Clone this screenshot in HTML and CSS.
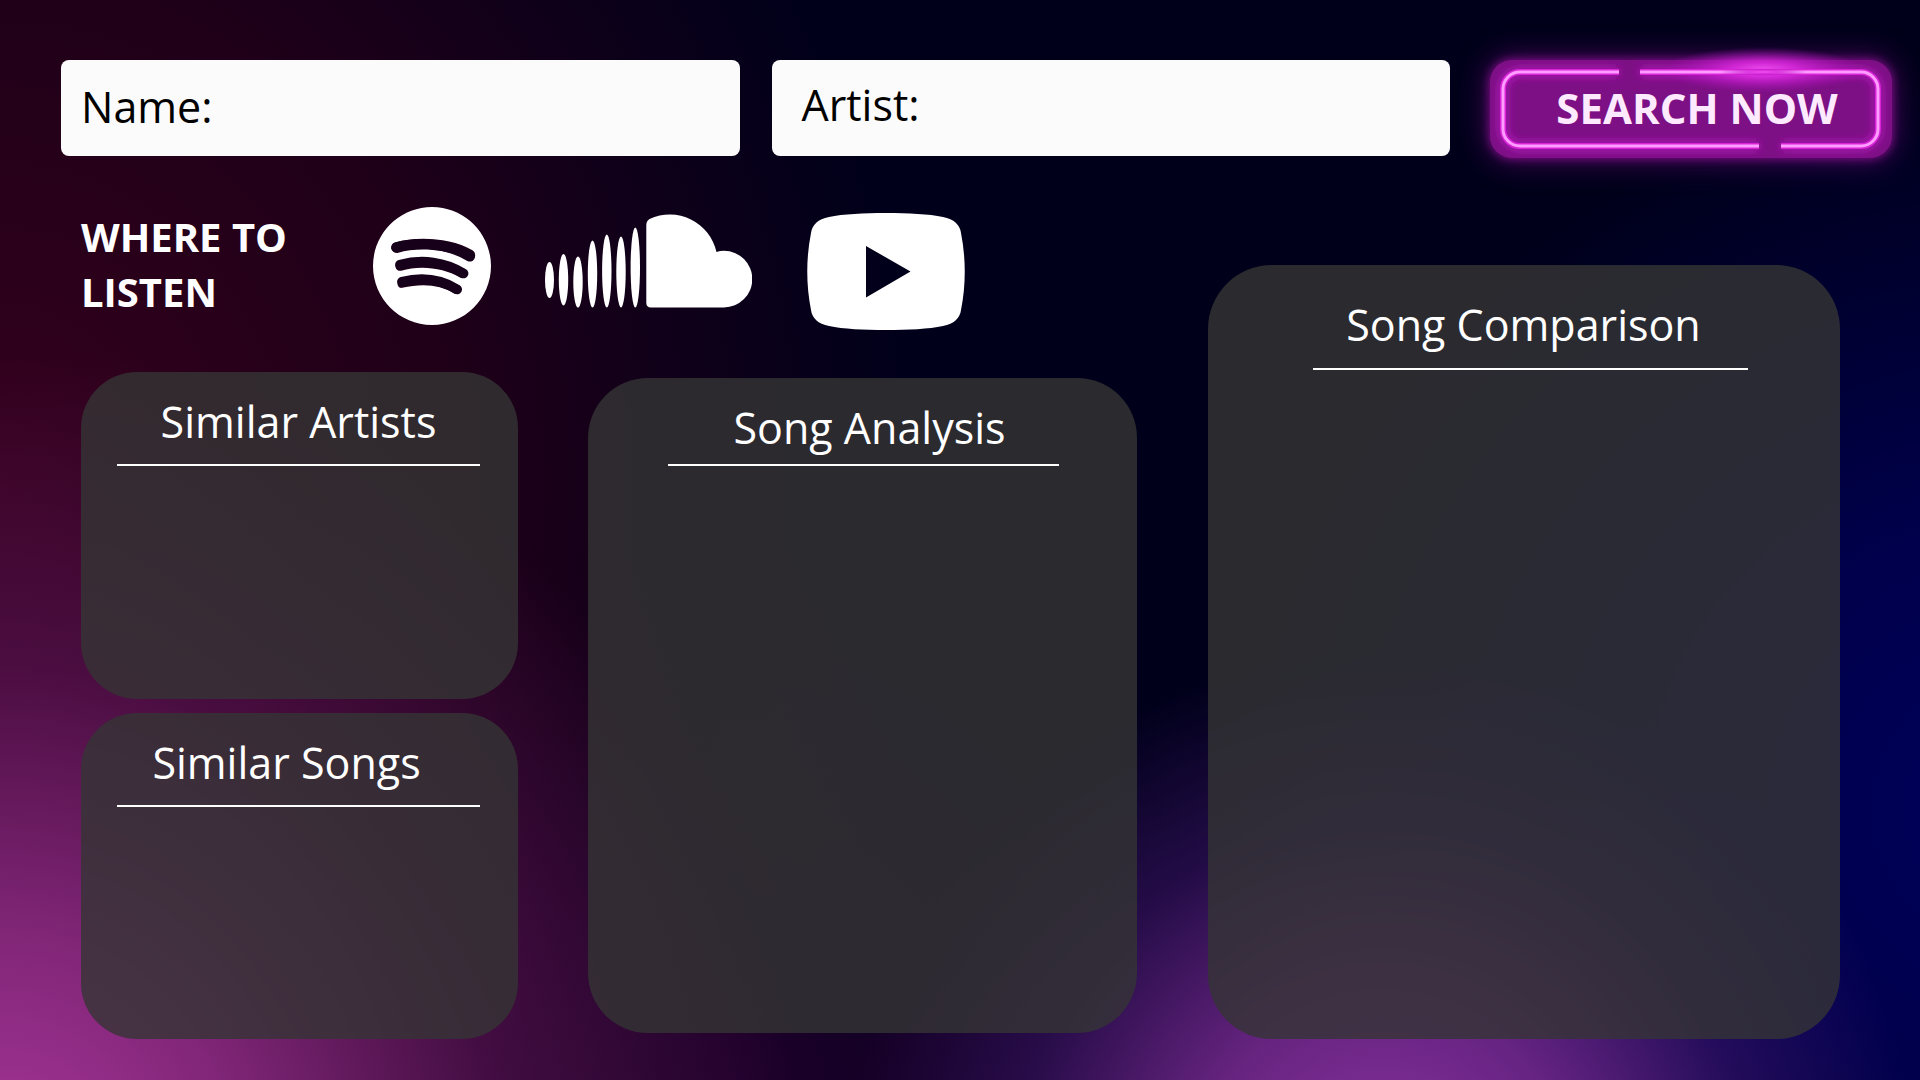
FILE: index.html
```html
<!DOCTYPE html>
<html lang="en">
<head>
<meta charset="utf-8">
<meta name="viewport" content="width=device-width, initial-scale=1">
<title>Song Search</title>
<link rel="stylesheet" href="styles.css">
</head>
<body>
<form class="search">
  <div class="field">
    <label for="name">Name:</label>
    <input id="name" type="text">
  </div>
  <div class="field field-artist">
    <label for="artist">Artist:</label>
    <input id="artist" type="text">
  </div>
  <button class="neon" type="submit">
    <svg class="neon-frame" viewBox="0 0 402 98" aria-hidden="true">
      <defs>
        <filter id="soft" x="-20%" y="-60%" width="140%" height="220%"><feGaussianBlur stdDeviation="5"/></filter>
        <radialGradient id="flare">
          <stop offset="0" stop-color="#f050f0"/>
          <stop offset=".35" stop-color="#d828dc" stop-opacity=".85"/>
          <stop offset="1" stop-color="#b010c0" stop-opacity="0"/>
        </radialGradient>
        <path id="tube" d="M129 12H30A17 17 0 0 0 13 29V69A17 17 0 0 0 30 86H269M291 86H371A17 17 0 0 0 388 69V29A17 17 0 0 0 371 12H150"/>
      </defs>
      <use href="#tube" fill="none" stroke="#b014b8" stroke-width="9" filter="url(#soft)"/>
      <ellipse cx="273" cy="10" rx="100" ry="23" fill="url(#flare)"/>
      <use href="#tube" fill="none" stroke="#d824d6" stroke-width="6"/>
      <use href="#tube" fill="none" stroke="#ff9cff" stroke-width="3"/>
      <ellipse cx="273" cy="12" rx="44" ry="4" fill="url(#flare)"/>
    </svg>
    <span class="neon-text">SEARCH NOW</span>
  </button>
</form>

<main class="board">
  <div class="main-column">
    <section class="listen">
      <h2 class="listen-title">WHERE TO LISTEN</h2>
      <a class="spotify" href="#spotify" aria-label="Spotify">
        <svg viewBox="0 0 24 24" width="118" height="118"><path d="M12 0C5.4 0 0 5.4 0 12s5.4 12 12 12 12-5.4 12-12S18.66 0 12 0zm5.521 17.34c-.24.359-.66.48-1.021.24-2.82-1.74-6.36-2.101-10.561-1.141-.418.122-.779-.179-.899-.539-.12-.421.18-.78.54-.9 4.56-1.021 8.52-.6 11.64 1.32.42.18.479.659.301 1.02zm1.44-3.3c-.301.42-.841.6-1.262.3-3.239-1.98-8.159-2.58-11.939-1.38-.479.12-1.02-.12-1.14-.6-.12-.48.12-1.021.6-1.141C9.6 9.9 15 10.561 18.72 12.84c.361.181.54.78.241 1.2zm.12-3.36C15.24 8.4 8.82 8.16 5.16 9.301c-.6.179-1.2-.181-1.38-.721-.18-.601.18-1.2.72-1.381 4.26-1.26 11.28-1.02 15.721 1.621.539.3.719 1.02.419 1.56-.299.421-1.02.599-1.559.3z"/><path class="wave" d="M4.700 8.200C9.400 6.900 15.100 7.400 19.700 10.100M5.500 11.750C10 10.500 14.700 11.200 18.400 13.500M5.900 15.200C10 14.200 13.800 14.700 17.100 16.750"/></svg>
      </a>
      <a class="soundcloud" href="#soundcloud" aria-label="SoundCloud">
        <svg viewBox="0 0 207 94" width="207" height="94">
          <ellipse cx="4.5" cy="66" rx="4.5" ry="18"/>
          <ellipse cx="18.5" cy="65.7" rx="4.7" ry="25.8"/>
          <ellipse cx="33" cy="68" rx="4.7" ry="25.6"/>
          <ellipse cx="47.5" cy="60" rx="4.7" ry="33.5"/>
          <ellipse cx="61.8" cy="57" rx="4.7" ry="36.5"/>
          <ellipse cx="76" cy="58" rx="4.7" ry="35.5"/>
          <ellipse cx="90.3" cy="53.5" rx="4.7" ry="40"/>
          <path d="M101.300 11Q101.300 7 104.500 5A48 48 0 0 1 171.500 38Q175 36.800 179 36.800A28.200 28.200 0 0 1 179 93.400H106Q101.300 93.400 101.300 88.700Z"/>
        </svg>
      </a>
      <a class="youtube" href="#youtube" aria-label="YouTube">
        <svg viewBox="0 0 158 117" width="158" height="117"><path fill-rule="evenodd" d="M79 0C101 0 122 1 136 4C147 6 153 12 154 20C159 45 159 72 154 97C153 105 147 111 136 113C122 116 101 117 79 117S36 116 22 113C11 111 5 105 4 97C-1 72-1 45 4 20C5 12 11 6 22 4C36 1 57 0 79 0ZM59 33V84.500L103.500 58.500Z"/></svg>
      </a>
    </section>
    <div class="cards">
      <div class="similar">
        <section class="card card-artists"><h2>Similar Artists</h2></section>
        <section class="card card-songs"><h2>Similar Songs</h2></section>
      </div>
      <section class="card card-analysis"><h2>Song Analysis</h2></section>
    </div>
  </div>
  <section class="card card-comparison"><h2>Song Comparison</h2></section>
</main>
</body>
</html>
```
FILE: styles.css
```css
* {
  box-sizing: border-box;
}

body {
  margin: 0;
  min-height: 100vh;
  display: flex;
  flex-direction: column;
  font-family: "Open Sans", "Noto Sans", sans-serif;
  font-size: 43px;
  color: #fff;
  background:
    radial-gradient(ellipse 28% 50% at 72% 110%, rgba(140, 50, 160, 1) 0%, rgba(120, 42, 145, .85) 35%, rgba(70, 24, 115, .5) 68%, rgba(30, 5, 80, 0) 100%),
    radial-gradient(ellipse 42% 78% at 0% 110%, rgba(170, 55, 155, 1) 0%, rgba(140, 42, 130, .9) 30%, rgba(96, 22, 90, .6) 62%, rgba(45, 0, 45, 0) 100%),
    radial-gradient(ellipse 48% 95% at 0% 45%, rgba(52, 0, 28, 1) 0%, rgba(34, 0, 24, .9) 50%, rgba(10, 0, 24, 0) 100%),
    radial-gradient(ellipse 42% 68% at 106% 75%, #00005c 0%, rgba(0, 0, 84, .85) 40%, rgba(0, 0, 26, 0) 100%),
    radial-gradient(ellipse 26% 50% at 38% 100%, rgba(36, 0, 46, .8) 0%, rgba(30, 0, 40, 0) 100%),
    #00001a;
}

h2 {
  margin: 0;
  font-size: 43px;
  font-weight: 400;
}

.search {
  display: grid;
  grid-template-columns: minmax(0, 1fr) minmax(0, 1fr) 402px;
  column-gap: 32px;
  padding: 60px 28px 0 61px;
}

.field {
  display: flex;
  align-items: center;
  height: 96px;
  padding: 0 20px 4px;
  border-radius: 8px;
  background: #fbfbfb;
  color: #000;
}

.field:first-child {
  margin-right: 4px;
}

.field-artist {
  margin-right: 8px;
  margin-left: -4px;
  padding: 0 30px 8px;
}

.field input {
  flex: 1;
  min-width: 0;
  margin-left: 12px;
  border: 0;
  outline: 0;
  background: transparent;
  font: inherit;
}

.neon {
  position: relative;
  height: 98px;
  padding: 0 0 4px 12px;
  border: 0;
  border-radius: 22px;
  background: #7c1084;
  box-shadow: 0 0 8px 1px #780c80, 0 0 28px 4px rgba(120, 14, 134, .55);
  font: inherit;
  font-size: 42px;
  font-weight: 700;
  color: #fdeaff;
}

.neon-frame {
  position: absolute;
  inset: 0;
  width: 100%;
  height: 100%;
  overflow: visible;
}

.neon-text {
  position: relative;
}

.board {
  flex: 1;
  display: grid;
  grid-template-columns: 1056fr 632fr;
  column-gap: 71px;
  padding: 0 80px 41px 81px;
}

.main-column {
  display: flex;
  flex-direction: column;
}

.listen {
  display: flex;
  align-items: flex-start;
  height: 214px;
  padding-top: 49px;
}

.listen svg {
  display: block;
  fill: #fff;
}

.listen .wave {
  fill: none;
  stroke: #16001a;
  stroke-width: 2;
  stroke-linecap: round;
}

.listen-title {
  width: 240px;
  margin-right: 52px;
  padding-top: 2px;
  font-size: 40px;
  font-weight: 700;
  line-height: 55px;
}

.soundcloud {
  margin: 7px 55px 0 54px;
}

.youtube {
  margin-top: 6px;
}

.cards {
  flex: 1;
  display: grid;
  grid-template-columns: 437fr 549fr;
  column-gap: 70px;
}

.similar {
  display: grid;
  grid-template-rows: 1fr 1fr;
  row-gap: 14px;
}

.card {
  border-radius: 60px;
  background: rgba(53, 53, 53, .8);
  text-align: center;
}

.card h2 {
  line-height: 60px;
  border-bottom: 2px solid #fff;
}

.card-artists,
.card-songs {
  padding: 20px 38px 0 36px;
  border-radius: 56px;
}

.card-artists h2,
.card-songs h2 {
  padding-bottom: 12px;
}

.card-songs h2 {
  padding-right: 24px;
}

.card-analysis {
  margin: 6px 0;
  padding: 20px 78px 0 80px;
}

.card-analysis h2 {
  padding: 0 0 6px 12px;
}

.card-comparison {
  margin-top: 107px;
  padding: 30px 92px 0 105px;
  border-radius: 64px;
}

.card-comparison h2 {
  padding: 0 14px 13px 0;
}
```
